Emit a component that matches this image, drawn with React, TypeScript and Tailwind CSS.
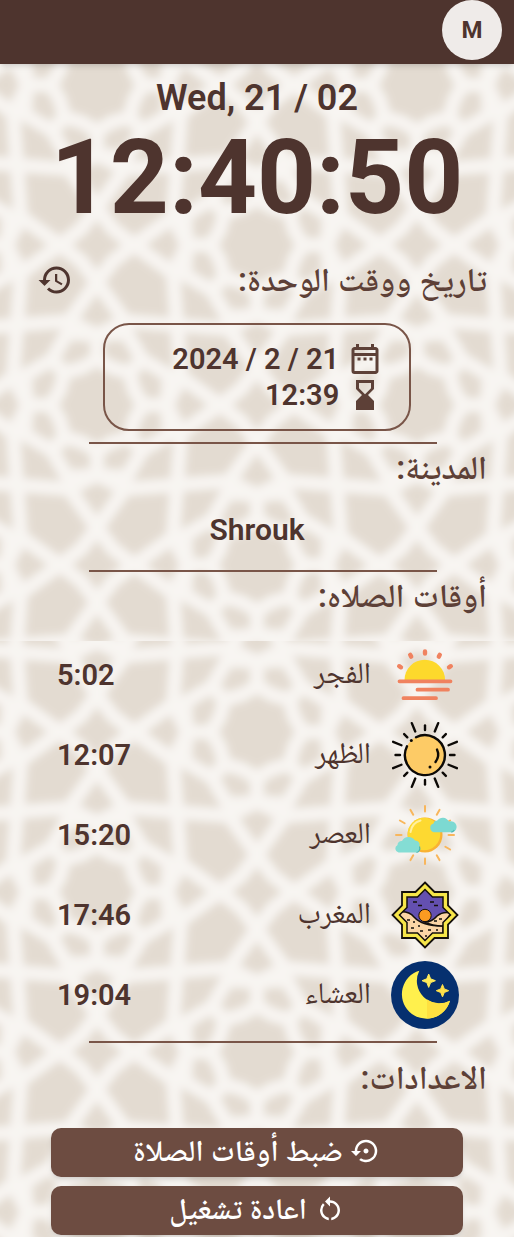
import type { ReactNode } from "react";
import {
  MdHistory,
  MdHourglassBottom,
  MdOutlineDateRange,
  MdRestartAlt,
  MdSettingsBackupRestore,
} from "react-icons/md";

/* ---------- lattice background ---------- */

const polar = (r: number, deg: number) => {
  const a = (deg * Math.PI) / 180;
  return [r * Math.cos(a), r * Math.sin(a)] as const;
};

const closed = (points: (readonly [number, number])[]) =>
  "M" + points.map(([x, y]) => `${x.toFixed(1)} ${y.toFixed(1)}`).join("L") + "Z";

const sixteenths = Array.from({ length: 16 }, (_, i) => i);
const outerRadius = (i: number) => (i % 2 ? 78 : i % 4 ? 64 : 70);
const innerRing = closed(sixteenths.map((i) => polar(i % 2 ? 40 : 46, i * 22.5)));
const outerRing = closed(sixteenths.map((i) => polar(outerRadius(i), i * 22.5)));
const spokes = sixteenths
  .filter((i) => i % 2 === 0)
  .map((i) => {
    const [a, b] = polar(46, i * 22.5);
    const [c, d] = polar(outerRadius(i), i * 22.5);
    return `M${a.toFixed(1)} ${b.toFixed(1)}L${c.toFixed(1)} ${d.toFixed(1)}`;
  })
  .join("");

function Rosette({ x, y }: { x: number; y: number }) {
  return (
    <g transform={`translate(${x} ${y})`}>
      <path d={innerRing + outerRing + spokes} />
      {[0, 90, 180, 270].map((turn) => (
        <path
          key={turn}
          transform={`rotate(${turn})`}
          d="M70 0L84 28L123 0L84 -28ZM84 28L80 80L28 84M123 0L144 16L160 37M123 0L144 -16L160 -37"
        />
      ))}
    </g>
  );
}

function Lattice({ id, shift, className }: { id: string; shift: number; className: string }) {
  return (
    <svg className={className} aria-hidden="true">
      <defs>
        <filter id={`${id}-soft`} x="-5%" y="-5%" width="110%" height="110%">
          <feGaussianBlur stdDeviation="4" />
        </filter>
        <pattern
          id={id}
          width="320"
          height="320"
          patternUnits="userSpaceOnUse"
          patternTransform={`translate(97 ${shift})`}
        >
          <rect width="320" height="320" fill="#e3dbd1" />
          <g fill="none" stroke="#f8f5f2" strokeWidth="14" strokeLinejoin="round">
            {[0, 320].map((x) => [0, 320].map((y) => <Rosette key={`${x}-${y}`} x={x} y={y} />))}
            <Rosette x={160} y={160} />
          </g>
        </pattern>
      </defs>
      <rect x="-5%" y="-5%" width="110%" height="110%" fill={`url(#${id})`} filter={`url(#${id}-soft)`} />
    </svg>
  );
}

/* ---------- prayer icons ---------- */

function IconFrame({ children }: { children: ReactNode }) {
  return (
    <svg viewBox="0 0 68 68" className="size-17 shrink-0 overflow-visible" aria-hidden="true">
      {children}
    </svg>
  );
}

const FajrIcon = () => (
  <IconFrame>
    <path d="M13.5 39a20.3 20.3 0 0 1 40.6 0z" fill="#fdd92c" />
    <g stroke="#f0825f" strokeWidth="3.8" strokeLinecap="round">
      <path d="M8.5 40.3H59.5M26.5 48.7H57M12.5 57.2H45" />
      <path
        d="M34 10.5v2M19.2 13.8l1 1.8M48.8 13.8l-1 1.8M8.2 25.2l1.8 1.1M59.8 25.2l-1.8 1.1"
        strokeWidth="4.4"
      />
    </g>
  </IconFrame>
);

const DhuhrIcon = () => (
  <IconFrame>
    <circle cx="34" cy="34" r="20" fill="#fdcb66" />
    <g fill="none" stroke="#0c0906" strokeWidth="2.4" strokeLinecap="round">
      <path d="M25 16.2A20 20 0 1 1 16 25.2" />
      <path d="M46 28.5q3 6.5-1.5 12.5" />
      {[0, 45, 90, 135, 180, 225, 270, 315].map((turn) => (
        <g key={turn} transform={`rotate(${turn} 34 34)`}>
          <path d="M34 9V4.5" />
          <path d="M34 8.5V-0.5" transform="rotate(22.5 34 34)" />
        </g>
      ))}
    </g>
    <g fill="#0c0906">
      <circle cx="20.3" cy="19.6" r="1.5" />
      <circle cx="39" cy="46" r="1.5" />
    </g>
  </IconFrame>
);

const AsrIcon = () => (
  <IconFrame>
    <g stroke="#f8b65c" strokeWidth="2" strokeLinecap="round">
      {[0, 30, 60, 90, 120, 150, 180, 210, 240, 270, 300, 330].map((turn) => (
        <path key={turn} d="M34 10.5V5" transform={`rotate(${turn} 34 34)`} />
      ))}
    </g>
    <circle cx="34" cy="34" r="17.5" fill="#f9b233" />
    <circle cx="33" cy="33" r="16.3" fill="#fdd931" />
    <path d="M19.5 31a14 14 0 0 1 10-11.5" fill="none" stroke="#fff0a0" strokeWidth="2" strokeLinecap="round" />
    <path
      d="M43.5 31.2a4.5 4.5 0 0 1-1-8.8 3 3 0 0 1 3.5-2.6 7 7 0 0 1 12 .8 5.5 5.5 0 0 1 4 10.6z"
      fill="#7cd9d2"
    />
    <path
      d="M7.5 51.5a4 4 0 0 1-1-7.5 4 4 0 0 1 4.5-4 7.5 7.5 0 0 1 13-.5 4.5 4.5 0 0 1 4.5 6c1 3-.5 5.5-3 6z"
      fill="#84ddd4"
    />
    <path d="M28.5 45.5c1 3-.5 5.5-3 6M63.3 29a5 5 0 0 1-3 2.2" fill="none" stroke="#4cb6b3" strokeWidth="1.2" />
  </IconFrame>
);

const starWindow =
  "M34 8.5L41.5 16H52V26.5L59.5 34L52 41.5V52H41.5L34 59.5L26.5 52H16V41.5L8.5 34L16 26.5V16H26.5Z";

const MaghribIcon = () => (
  <IconFrame>
    <path
      d="M34 1.5L43.5 11H57V24.5L66.5 34L57 43.5V57H43.5L34 66.5L24.5 57H11V43.5L1.5 34L11 24.5V11H24.5Z"
      fill="#f7e649"
      stroke="#15100b"
      strokeWidth="1.8"
    />
    <clipPath id="maghrib-window">
      <path d={starWindow} />
    </clipPath>
    <g clipPath="url(#maghrib-window)">
      <rect width="68" height="68" fill="#6450b0" />
      <circle cx="34" cy="34.5" r="6.2" fill="#fb9b21" stroke="#15100b" strokeWidth="1" />
      <path d="M8 31q10-1 15 5 8 9 29 9V62H8z" fill="#fbd5a5" stroke="#15100b" strokeWidth="1.5" />
      <path d="M34 41q7 0 12-6 6-5 14-3l-8 13q-11 0-18-4z" fill="#fbd5a5" stroke="#15100b" strokeWidth="1.5" />
      <path
        d="M22 21h4M27 24.5h4M39 21h4M43 24.5h4M16 39h3M22 41h2M20 47h3M27 45h2M29 50h3M37 49h3M45 49h2M34 55h2M43 40h3M48 38h3"
        stroke="#15100b"
        strokeWidth="1.4"
      />
    </g>
    <path d={starWindow} fill="none" stroke="#15100b" strokeWidth="1.5" />
  </IconFrame>
);

const IshaIcon = () => (
  <IconFrame>
    <circle cx="34" cy="34" r="34" fill="#06306f" />
    <path d="M28.3 9.7A24.5 24.5 0 1 0 59 39.7A22.5 22.5 0 0 1 28.3 9.7Z" fill="#fff04d" />
    <path d="M36 38.6A22.5 22.5 0 0 0 59 39.7A24.5 24.5 0 0 1 36 57.6Z" fill="#fee040" />
    <path d="M37.7 13l1.9 4.8 4.8 1.9-4.8 1.9-1.9 4.8-1.9-4.8-4.8-1.9 4.8-1.9z" fill="#ffeb5a" stroke="#ffeb5a" />
    <path d="M51.5 23.5l1.8 4.4 4.4 1.8-4.4 1.8-1.8 4.4-1.8-4.4-4.4-1.8 4.4-1.8z" fill="#ffe04a" stroke="#ffe04a" />
  </IconFrame>
);

const prayers = [
  { name: "الفجر", time: "5:02", Icon: FajrIcon },
  { name: "الظهر", time: "12:07", Icon: DhuhrIcon },
  { name: "العصر", time: "15:20", Icon: AsrIcon },
  { name: "المغرب", time: "17:46", Icon: MaghribIcon },
  { name: "العشاء", time: "19:04", Icon: IshaIcon },
];

/* ---------- page ---------- */

function SectionTitle({ children }: { children: ReactNode }) {
  return <h2 className="text-[33px] leading-12 font-semibold text-[#5d4037]">{children}</h2>;
}

const Divider = () => <hr className="mr-[77px] ml-[89px] h-0.5 border-0 bg-[#795548]" />;

function ActionButton({ icon, children }: { icon: ReactNode; children: ReactNode }) {
  return (
    <button
      type="button"
      className="flex h-[49px] w-full items-center justify-center gap-2 rounded-[10px] bg-[#6d4c41] pb-1 text-[30px] leading-11 font-semibold text-white shadow-md"
    >
      {icon}
      <span>{children}</span>
    </button>
  );
}

export default function App() {
  return (
    <div
      dir="rtl"
      lang="ar"
      className="relative isolate min-h-screen overflow-hidden bg-[#e8e0d6] font-[Roboto,'Noto_Naskh_Arabic','Noto_Sans_Arabic','DejaVu_Sans',sans-serif] text-[#4e342e]"
    >
      <div className="absolute inset-0 -z-10 flex flex-col">
        <Lattice id="lattice-top" shift={85} className="block h-[641px] w-full shrink-0" />
        <Lattice id="lattice-bottom" shift={-69} className="block min-h-0 w-full flex-1" />
      </div>

      <header className="flex h-16 items-start bg-[#4e342e] px-3 shadow-md">
        <button
          type="button"
          className="flex size-15 items-center justify-center rounded-full bg-[#efebe9] text-2xl font-bold"
        >
          M
        </button>
      </header>

      <main className="pb-0.5">
        <p dir="ltr" className="pt-2.5 text-center text-4xl leading-12 font-semibold">
          Wed, 21 / 02
        </p>
        <p dir="ltr" className="text-center text-[103px] leading-28 font-bold">
          12:40:50
        </p>

        <div className="mt-[22px] flex items-center justify-between pr-[27px] pl-[37px]">
          <SectionTitle>تاريخ ووقت الوحدة:</SectionTitle>
          <button type="button" aria-label="مزامنة الوقت">
            <MdHistory className="size-9" />
          </button>
        </div>

        <div className="mx-auto mt-[19px] w-3/5 rounded-[26px] border-2 border-[#795548] py-4 pr-[26px] pl-4 text-[29px] leading-9 font-semibold">
          <div className="flex items-center gap-2">
            <MdOutlineDateRange className="size-9 text-[#5d4037]" />
            <span dir="ltr">2024 / 2 / 21</span>
          </div>
          <div className="flex items-center gap-2">
            <MdHourglassBottom className="size-9 text-[#5d4037]" />
            <span dir="ltr">12:39</span>
          </div>
        </div>

        <div className="mt-[11px]">
          <Divider />
        </div>
        <div className="px-[27px]">
          <SectionTitle>المدينة:</SectionTitle>
        </div>
        <p className="mt-[18px] mb-5 text-center text-[30px] leading-10 font-semibold">Shrouk</p>

        <Divider />
        <div className="px-[27px]">
          <SectionTitle>أوقات الصلاه:</SectionTitle>
        </div>
        <ul className="mt-[15px] pr-[55px] pl-[57px]">
          {prayers.map(({ name, time, Icon }) => (
            <li key={name} className="flex h-20 items-center gap-5">
              <Icon />
              <span className="flex-1 pb-1 text-[30px] leading-10">{name}</span>
              <span dir="ltr" className="text-[29px] leading-10 font-semibold">
                {time}
              </span>
            </li>
          ))}
        </ul>

        <div className="mt-1.5">
          <Divider />
        </div>
        <div className="mt-[11px] px-[27px]">
          <SectionTitle>الاعدادات:</SectionTitle>
        </div>
        <div className="mx-auto mt-[26px] flex w-4/5 flex-col gap-[9px]">
          <ActionButton icon={<MdSettingsBackupRestore className="size-[30px]" />}>ضبط أوقات الصلاة</ActionButton>
          <ActionButton icon={<MdRestartAlt className="size-[30px]" />}>اعادة تشغيل</ActionButton>
        </div>
      </main>
    </div>
  );
}
